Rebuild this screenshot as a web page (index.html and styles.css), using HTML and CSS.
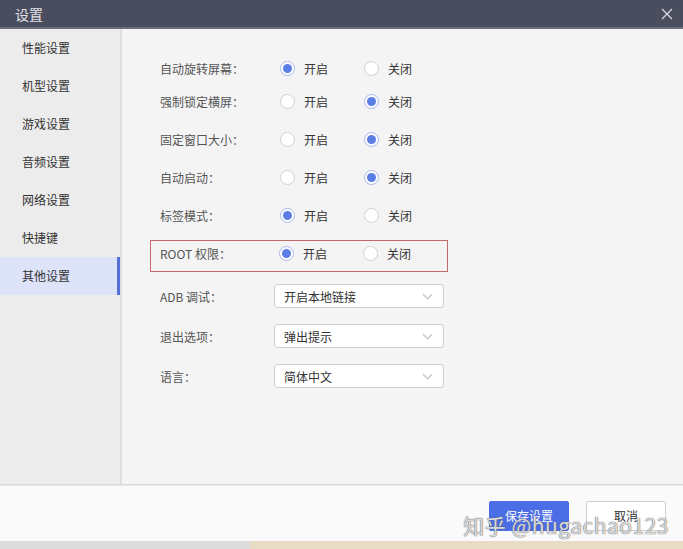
FILE: index.html
```html
<!DOCTYPE html>
<html lang="zh-CN">
<head>
  <meta charset="UTF-8" />
  <title>设置</title>
  <link rel="stylesheet" href="styles.css">
</head>
<body>
  <div class="window">
    <div class="titlebar">
      <span class="title">设置</span>
      <svg class="close" width="12" height="12" viewBox="0 0 12 12">
        <path d="M1 1L11 11M11 1L1 11" stroke="#d8dae0" stroke-width="1.3" fill="none"/>
      </svg>
    </div>

    <div class="main">
      <ul class="menu">
        <li>性能设置</li>
        <li>机型设置</li>
        <li>游戏设置</li>
        <li>音频设置</li>
        <li>网络设置</li>
        <li>快捷键</li>
        <li class="active">其他设置</li>
      </ul>

      <div class="panel">
        <div class="row first">
          <span class="label">自动旋转屏幕：</span>
          <div class="options">
            <span class="opt"><i class="radio on"></i>开启</span>
            <span class="opt"><i class="radio"></i>关闭</span>
          </div>
        </div>
        <div class="row">
          <span class="label">强制锁定横屏：</span>
          <div class="options">
            <span class="opt"><i class="radio"></i>开启</span>
            <span class="opt"><i class="radio on"></i>关闭</span>
          </div>
        </div>
        <div class="row">
          <span class="label">固定窗口大小：</span>
          <div class="options">
            <span class="opt"><i class="radio"></i>开启</span>
            <span class="opt"><i class="radio on"></i>关闭</span>
          </div>
        </div>
        <div class="row">
          <span class="label">自动启动：</span>
          <div class="options">
            <span class="opt"><i class="radio"></i>开启</span>
            <span class="opt"><i class="radio on"></i>关闭</span>
          </div>
        </div>
        <div class="row">
          <span class="label">标签模式：</span>
          <div class="options">
            <span class="opt"><i class="radio on"></i>开启</span>
            <span class="opt"><i class="radio"></i>关闭</span>
          </div>
        </div>
        <div class="row marked">
          <span class="label">ROOT 权限：</span>
          <div class="options">
            <span class="opt"><i class="radio on"></i>开启</span>
            <span class="opt"><i class="radio"></i>关闭</span>
          </div>
        </div>
        <div class="row select-row adb">
          <span class="label">ADB 调试：</span>
          <div class="select">开启本地链接<i class="chev"></i></div>
        </div>
        <div class="row select-row">
          <span class="label">退出选项：</span>
          <div class="select">弹出提示<i class="chev"></i></div>
        </div>
        <div class="row select-row">
          <span class="label">语言：</span>
          <div class="select">简体中文<i class="chev"></i></div>
        </div>
      </div>
    </div>

    <div class="footer">
      <button class="btn primary">保存设置</button>
      <button class="btn">取消</button>
      <span class="watermark">知乎 @hugachao123</span>
    </div>
  </div>
  <div class="desk"><span class="left"></span><span class="right"></span></div>
</body>
</html>
```

FILE: styles.css
```css
* {
  box-sizing: border-box;
}

body {
  margin: 0;
  width: 683px;
  height: 549px;
  overflow: hidden;
  font-family: "Noto Sans CJK SC", "Noto Sans", sans-serif;
  font-size: 12px;
  color: #444;
  background: #f4f4f4;
}

.window {
  display: flex;
  flex-direction: column;
  height: 541px;
}

.titlebar {
  height: 29px;
  background: #4a4d5d;
  border-bottom: 2px solid #6a6d7b;
  display: flex;
  align-items: center;
  justify-content: space-between;
  padding: 0 10px 0 15px;
}

.title {
  color: #e2e3e8;
  font-size: 14px;
}

.main {
  flex: 1;
  display: flex;
  border-bottom: 1px solid #dcdcdc;
}

.menu {
  list-style: none;
  margin: 0;
  padding: 0;
  width: 122px;
  background: #ececec;
  border-right: 2px solid #dedede;
}

.menu li {
  height: 38px;
  line-height: 38px;
  padding-left: 22px;
  color: #333;
}

.menu li.active {
  background: #dde3f9;
  box-shadow: inset -3px 0 0 #5470d6;
}

.panel {
  flex: 1;
  padding: 23px 0 0 28px;
  display: flex;
  flex-direction: column;
  gap: 6px;
}

.row {
  display: flex;
  align-items: center;
  height: 32px;
  padding-left: 10px;
  width: 298px;
}

.row.first {
  margin-bottom: -5px;
}

.row.marked {
  border: 1px solid #c46a6a;
  padding-left: 9px;
  padding-bottom: 5px;
  margin-top: 3px;
}

.row.adb {
  margin-top: 8px;
}

.row.select-row {
  margin-top: 2px;
}

.label {
  width: 114px;
  color: #555;
}

.options {
  display: flex;
  margin-left: 12px;
}

.opt {
  display: flex;
  align-items: center;
  width: 84px;
  color: #333;
}

.radio {
  width: 15px;
  height: 15px;
  border-radius: 50%;
  border: 1px solid #d0d0d0;
  background: #fff;
  margin-right: 9px;
  position: relative;
}

.radio.on {
  border-color: #a9b7ee;
}

.radio.on::after {
  content: "";
  position: absolute;
  left: 2px;
  top: 2px;
  width: 9px;
  height: 9px;
  border-radius: 50%;
  background: #5b7de6;
}

.select {
  width: 170px;
  height: 24px;
  background: #fff;
  border: 1px solid #cfcfcf;
  border-radius: 3px;
  display: flex;
  align-items: center;
  justify-content: space-between;
  padding: 0 12px 0 9px;
  color: #333;
}

.chev {
  width: 7px;
  height: 7px;
  border-right: 1px solid #b8b8b8;
  border-bottom: 1px solid #b8b8b8;
  transform: rotate(45deg);
  margin-top: -4px;
}

.footer {
  height: 56px;
  background: #fafafa;
  border-top: 1px solid #e6e6e6;
  display: flex;
  align-items: center;
  justify-content: flex-end;
  gap: 17px;
  padding-right: 17px;
  position: relative;
}

.btn {
  width: 80px;
  height: 30px;
  border: 1px solid #cfcfcf;
  border-radius: 2px;
  background: #fff;
  color: #333;
  font-family: inherit;
  font-size: 12px;
  margin-top: 4px;
}

.btn.primary {
  background: #4b6ee6;
  border-color: #4b6ee6;
  color: #fff;
}

.watermark {
  position: absolute;
  right: 14px;
  top: 24px;
  font-size: 21px;
  color: rgba(255, 255, 255, 0.75);
  text-shadow: 0 0 1px #666, 0 0 1px #666;
  letter-spacing: 0.5px;
}

.desk {
  display: flex;
  height: 8px;
}

.desk .left {
  width: 250px;
  background: #dcdcdc;
}

.desk .right {
  flex: 1;
  background: #e8dcc6;
}
```
